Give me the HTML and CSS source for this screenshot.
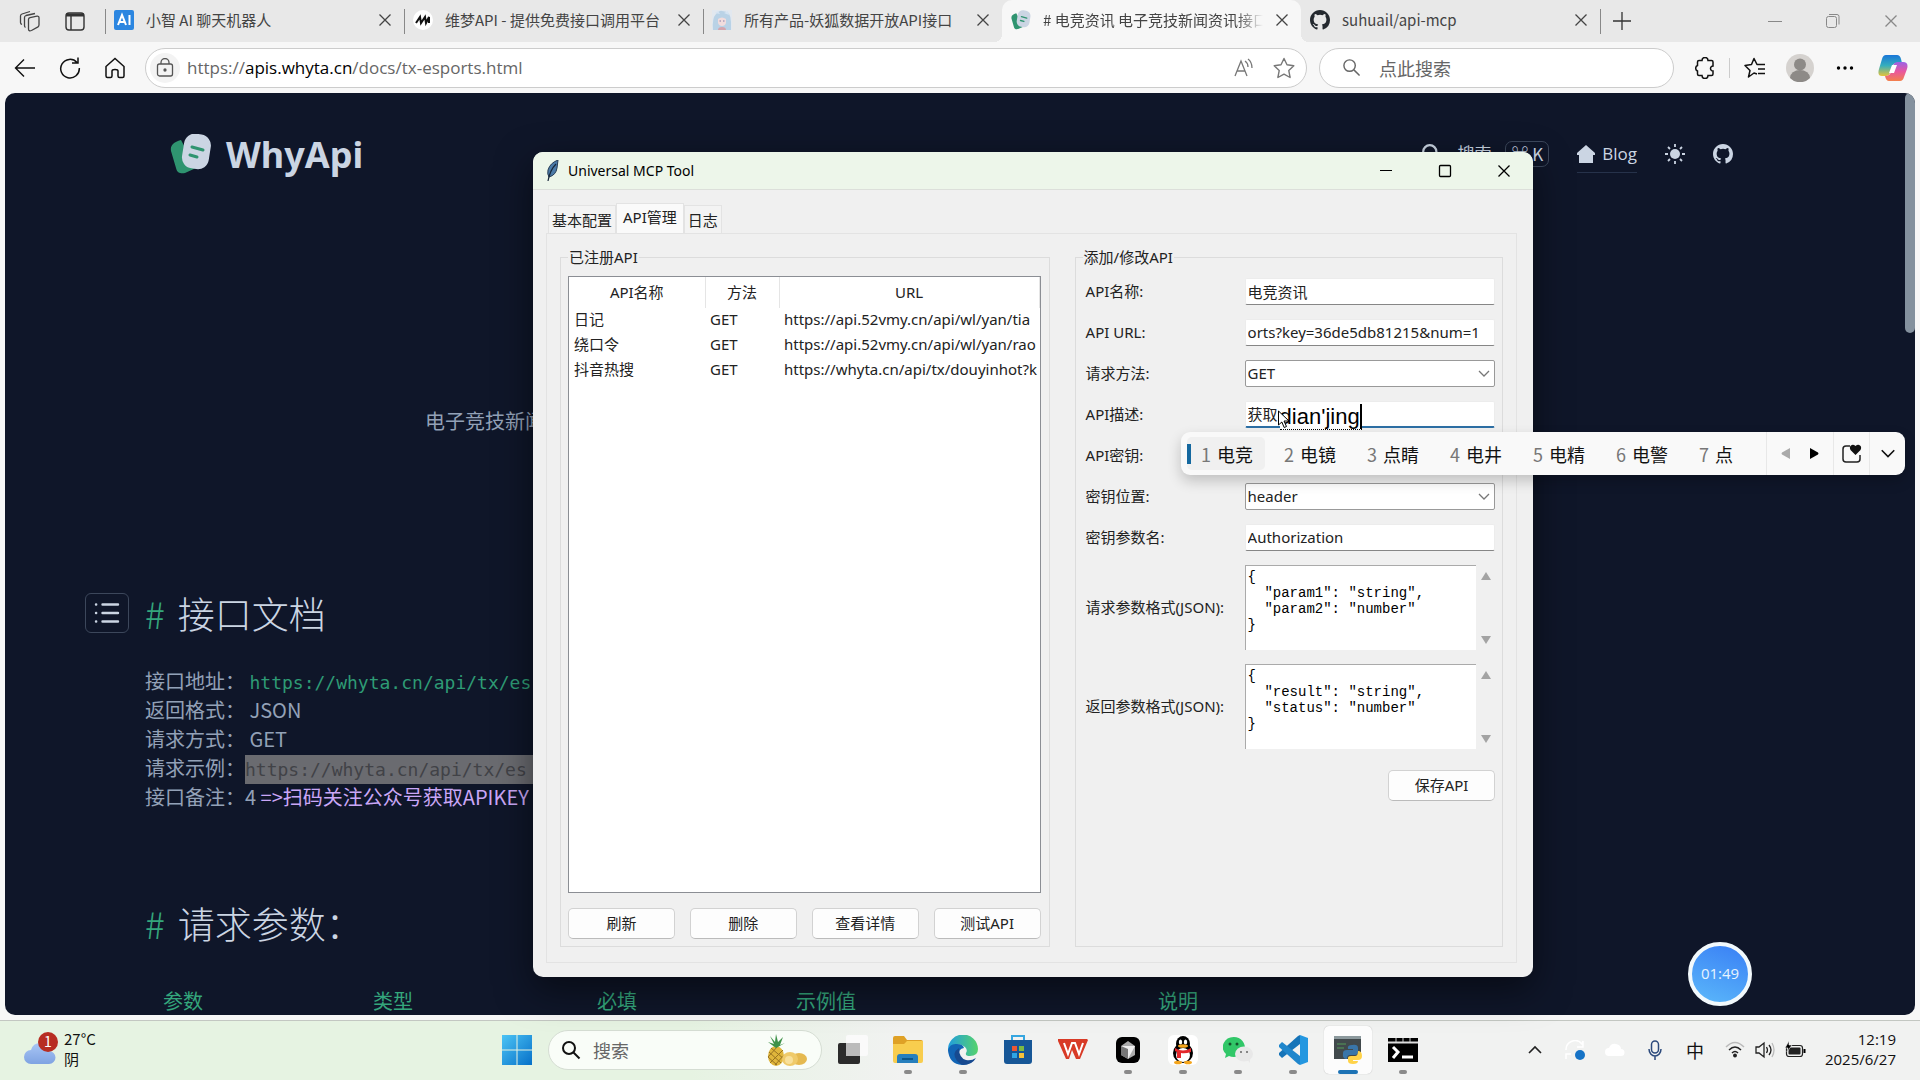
FILE: index.html
```html
<!DOCTYPE html>
<html lang="zh-CN">
<head>
    <meta charset="UTF-8">
    <meta name="viewport" content="width=device-width, initial-scale=1.0">
    <title>Universal MCP Tool</title>
    <link rel="stylesheet" href="styles.css">
</head>
<body>
    <!-- shared icons -->
    <svg class="defs" width="0" height="0" aria-hidden="true">
        <symbol id="github" viewBox="0 0 16 16"><path d="M8 0C3.58 0 0 3.58 0 8c0 3.54 2.29 6.53 5.47 7.59.4.07.55-.17.55-.38v-1.49c-2.01.37-2.53-.49-2.69-.94-.09-.23-.48-.94-.82-1.13-.28-.15-.68-.52-.01-.53.63-.01 1.08.58 1.23.82.72 1.21 1.87.87 2.33.66.07-.52.28-.87.51-1.07-1.78-.2-3.64-.89-3.64-3.95 0-.87.31-1.59.82-2.15-.08-.2-.36-1.02.08-2.12 0 0 .67-.21 2.2.82a7.6 7.6 0 0 1 4 0c1.53-1.04 2.2-.82 2.2-.82.44 1.1.16 1.92.08 2.12.51.56.82 1.27.82 2.15 0 3.07-1.87 3.75-3.65 3.95.29.25.54.73.54 1.48v2.2c0 .21.15.46.55.38A8 8 0 0 0 16 8c0-4.42-3.58-8-8-8z" fill="currentColor"/></symbol>
        <symbol id="close" viewBox="0 0 14 14"><path d="M1.500 1.500l11 11M12.500 1.500l-11 11" stroke="currentColor" stroke-width="1.300" fill="none"/></symbol>
        <symbol id="search" viewBox="0 0 20 20"><g stroke="currentColor" fill="none"><circle cx="8" cy="8" r="6"/><path d="M12.500 12.500l6 6"/></g></symbol>
        <symbol id="whyapi" viewBox="0 0 42 40"><path d="M11 6C4 8 0 11 1 17l5 17c1 5 5 6 9 5l11-5z" fill="#2f9470"/><rect x="13" y="0" width="27" height="35" rx="11" transform="rotate(9 27 17)" fill="#cbd5e3"/><path d="M22 13l11 3M20 21l7 2" stroke="#2f9470" stroke-width="3" stroke-linecap="round"/></symbol>
        <symbol id="chevron" viewBox="0 0 12 8"><path d="M1 1l5 5 5-5" stroke="currentColor" stroke-width="1.300" fill="none"/></symbol>
    </svg>

    <div class="browser">
        <div class="tab-bar">
            <button class="bar-btn" aria-label="工作区"><svg width="22" height="22" viewBox="0 0 22 22" fill="none" stroke="#444" stroke-width="1.300"><path d="M9.500 9.500q0-1.500 1.500-1.800l7-1.500q2-.3 2 1.500v7q0 1.500-1 2.200l-6.500 3.600q-3 1-3-1.500z"/><path d="M6.500 17.500q-1-.5-1-2V7.500q0-1.500 1.500-2l9-2M3 14.500q-1.500-.5-1.500-2V6q0-1.500 1.500-2l8-2.500"/></svg></button>
            <button class="bar-btn" aria-label="标签页操作"><svg width="20" height="20" viewBox="0 0 20 20" fill="none" stroke="#333" stroke-width="1.400"><rect x="1" y="2" width="18" height="17" rx="3"/><path d="M1 4.500h18M1 3.500h18" stroke-width="2"/><path d="M6 5v14"/></svg></button>
            <div class="tab">
                <svg class="fav" viewBox="0 0 20 20"><rect width="20" height="20" rx="2" fill="#2c86e0"/><path d="M4 15l4-10 4 10M5.500 12h5M15.500 5v10" stroke="#fff" stroke-width="2" fill="none"/></svg>
                <span class="tab-title">小智 AI 聊天机器人</span>
                <button class="tab-x" aria-label="关闭"><svg><use href="#close"/></svg></button>
            </div>
            <div class="tab">
                <svg class="fav" viewBox="0 0 20 20"><circle cx="10" cy="10" r="10" fill="#fff"/><path d="M3 13l4-6 1 6 4-6 1 6 3-6v6" stroke="#111" stroke-width="2" fill="none"/></svg>
                <span class="tab-title">维梦API - 提供免费接口调用平台</span>
                <button class="tab-x" aria-label="关闭"><svg><use href="#close"/></svg></button>
            </div>
            <div class="tab">
                <svg class="fav" viewBox="0 0 20 20"><rect width="20" height="20" fill="#e2e8ef"/><path d="M1 20Q0 8 4 4t6-3q9 0 9 11v8z" fill="#b9d2e6"/><path d="M3 3l3-2 2 3zM12 3l4-2 1 4z" fill="#d5e4f3"/><path d="M6 9q4-3 8 0v4q-1 3-4 3t-4-3z" fill="#f1dcdd"/><path d="M7.500 11H9M11 11h1.500" stroke="#8a7fa8"/><path d="M6 20q0-3 4-3t4 3z" fill="#d3a5ae"/></svg>
                <span class="tab-title">所有产品-妖狐数据开放API接口</span>
                <button class="tab-x" aria-label="关闭"><svg><use href="#close"/></svg></button>
            </div>
            <div class="tab active">
                <svg class="fav"><use href="#whyapi"/></svg>
                <span class="tab-title fade"># 电竞资讯 电子竞技新闻资讯接口</span>
                <button class="tab-x" aria-label="关闭"><svg><use href="#close"/></svg></button>
            </div>
            <div class="tab last">
                <svg class="fav dark"><use href="#github"/></svg>
                <span class="tab-title">suhuail/api-mcp</span>
                <button class="tab-x" aria-label="关闭"><svg><use href="#close"/></svg></button>
            </div>
            <button class="new-tab" aria-label="新建标签页"><svg width="18" height="18" viewBox="0 0 18 18"><path d="M9 0v18M0 9h18" stroke="#333" stroke-width="1.300"/></svg></button>
            <div class="browser-controls">
                <button aria-label="最小化"><svg width="14" height="14" viewBox="0 0 14 14"><path d="M0 7.500h14" stroke="#888"/></svg></button>
                <button aria-label="还原"><svg width="14" height="14" viewBox="0 0 14 14" fill="none" stroke="#888"><rect x=".5" y="2.500" width="10" height="11" rx="2"/><path d="M3 .5h8q2 0 2 2v8"/></svg></button>
                <button aria-label="关闭"><svg width="14" height="14" color="#888"><use href="#close"/></svg></button>
            </div>
        </div>

        <div class="toolbar">
            <button class="tool" aria-label="后退"><svg width="22" height="22" viewBox="0 0 22 22" fill="none" stroke="#111" stroke-width="1.400"><path d="M21 11H2M10 2.500L1.500 11l8.500 8.500"/></svg></button>
            <button class="tool" aria-label="刷新"><svg width="22" height="22" viewBox="0 0 22 22" fill="none" stroke="#111" stroke-width="1.500"><path d="M18 5.500A9.300 9.300 0 1 0 20.300 11M13 6h6V.5"/></svg></button>
            <button class="tool" aria-label="主页"><svg width="20" height="22" viewBox="0 0 20 22" fill="none" stroke="#111" stroke-width="1.500"><path d="M1 9.500L10 1.500l9 8V19q0 1.500-1.500 1.500h-3Q13 20.500 13 19v-5q0-1.500-3-1.500T7 14v5q0 1.500-1.500 1.500h-3Q1 20.500 1 19z"/></svg></button>
            <div class="address">
                <span class="lock"><svg width="18" height="20" viewBox="0 0 18 20" fill="none" stroke="#555" stroke-width="1.300"><rect x="1.500" y="6" width="15" height="12" rx="2"/><path d="M5 6V4.500a4 4 0 0 1 8 0V6"/><circle cx="9" cy="12" r="1" fill="#333"/></svg></span>
                <a class="url" href="#doc">https://<b>apis.whyta.cn</b>/docs/tx-esports.html</a>
                <button class="tool" aria-label="大声朗读"><svg width="22" height="20" viewBox="0 0 22 20" fill="none" stroke="#777" stroke-width="1.300"><path d="M2 18L8 3l6 15M4 13h8M12 3q3 2 3 6M15 1q4 3 4 9"/></svg></button>
                <button class="tool" aria-label="收藏"><svg width="22" height="22" viewBox="0 0 22 22" fill="none" stroke="#777" stroke-width="1.400" stroke-linejoin="round"><path d="M11 1.500l3 6.300 6.800 1-5 4.800 1.300 6.900-6.100-3.300-6.100 3.300 1.300-6.900-5-4.800 6.800-1z"/></svg></button>
            </div>
            <label class="side-search">
                <svg width="19" height="19" stroke-width="1.500"><use href="#search"/></svg>
                <input type="text" placeholder="点此搜索" aria-label="点此搜索">
            </label>
            <div class="tools">
                <button class="tool" aria-label="扩展"><svg width="20" height="22" viewBox="0 0 20 22" fill="none" stroke="#111" stroke-width="1.500"><path d="M7 3.500a3 3 0 0 1 6 0h3.500q1.500 0 1.500 1.500v4a2.500 2.500 0 1 0 0 5v3q0 1.500-1.500 1.500H13a3 3 0 0 1-6 0H4Q2.500 18.500 2.500 17v-3a3 3 0 0 1 0-5.500V5Q2.500 3.500 4 3.500z"/></svg></button>
                <span class="sep"></span>
                <button class="tool" aria-label="收藏夹"><svg width="22" height="22" viewBox="0 0 22 22" fill="none" stroke="#111" stroke-width="1.500" stroke-linejoin="round"><path d="M13 17l-3-1-5.500 4L6 13.500l-5-5 6.500-1L10 1.500l3 6h8M14 12h7M14 16.500h7"/></svg></button>
                <button class="tool" aria-label="个人资料"><svg width="28" height="28" viewBox="0 0 28 28"><circle cx="14" cy="14" r="14" fill="#d5d2cf"/><circle cx="14" cy="10.500" r="6" fill="#8d8a87"/><path d="M4 24a10 8 0 0 1 20 0 14 14 0 0 1-20 0z" fill="#8d8a87"/></svg></button>
                <button class="tool" aria-label="更多"><svg width="18" height="6" viewBox="0 0 18 6"><circle cx="2.500" cy="3" r="1.700"/><circle cx="9" cy="3" r="1.700"/><circle cx="15.500" cy="3" r="1.700"/></svg></button>
                <button class="tool copilot" aria-label="Copilot"><svg width="30" height="28" viewBox="0 0 30 28"><defs><linearGradient id="cp1" x2="0" y2="1"><stop stop-color="#1976d8"/><stop offset=".5" stop-color="#35aebd"/><stop offset="1" stop-color="#e5c43b"/></linearGradient><linearGradient id="cp2" x2="0" y2="1"><stop stop-color="#9a63e6"/><stop offset=".5" stop-color="#e9579f"/><stop offset="1" stop-color="#f3804c"/></linearGradient></defs><path d="M8 1h11q3 0 4 4l1 4h-5q-4 0-5 4l-2 6q-1 3-4 3H4q-5 0-3-7L4 5q1-4 4-4z" fill="url(#cp1)"/><path d="M22 27H11q-3 0-4-5 5 0 6-4l2-6q1-4 5-4h5q6 0 4 7l-3 8q-1 4-4 4z" fill="url(#cp2)"/><path d="M14 11h5l-3 8h-5z" fill="#fff"/></svg></button>
            </div>
        </div>

        <main class="page" id="doc">
            <header class="site-header">
                <a class="brand" href="#doc"><svg width="42" height="40"><use href="#whyapi"/></svg>WhyApi</a>
                <nav class="site-nav">
                    <a class="nav-search" href="#search"><svg width="22" height="22" stroke-width="2"><use href="#search"/></svg>搜索<kbd>⌘ K</kbd></a>
                    <a class="blog" href="#blog"><svg width="18" height="18" viewBox="0 0 18 18"><path d="M9 0l9 8v2h-2v8H2v-8H0V8z" fill="currentColor"/></svg>Blog</a>
                    <button aria-label="主题"><svg width="20" height="20" viewBox="0 0 20 20"><circle cx="10" cy="10" r="5" fill="currentColor"/><path d="M10 0v3M10 17v3M0 10h3M17 10h3M3 3l2 2M15 15l2 2M3 17l2-2M15 5l2-2" stroke="currentColor" stroke-width="1.800"/></svg></button>
                    <a href="#github" aria-label="GitHub"><svg width="20" height="20"><use href="#github"/></svg></a>
                </nav>
            </header>
            <p class="intro">电子竞技新闻</p>
            <section class="doc">
                <div class="doc-head">
                    <button class="toc" aria-label="目录"><svg width="26" height="22" viewBox="0 0 26 22" stroke="#cbd5e3" stroke-width="2.400" stroke-linecap="round"><path d="M8.500 2.500H24M8.500 11H24M8.500 19.500H24M2 2.500h.2M2 11h.2M2 19.500h.2"/></svg></button>
                    <h2><a href="#doc">#</a>接口文档</h2>
                </div>
                <ul class="facts">
                    <li>接口地址： <code>https://whyta.cn/api/tx/es</code></li>
                    <li>返回格式： JSON</li>
                    <li>请求方式： GET</li>
                    <li>请求示例：<code class="selected">https://whyta.cn/api/tx/es</code></li>
                    <li>接口备注：4 <a href="#key">=&gt;扫码关注公众号获取APIKEY</a></li>
                </ul>
                <h2 class="second"><a href="#params">#</a>请求参数：</h2>
                <table class="params">
                    <colgroup><col class="c1"><col class="c2"><col class="c3"><col class="c4"><col></colgroup>
                    <tr><th>参数</th><th>类型</th><th>必填</th><th>示例值</th><th>说明</th></tr>
                </table>
            </section>
            <span class="page-scroll"></span>
        </main>
    </div>

    <div class="timer">01:49</div>

    <section class="window">
        <div class="title-bar">
            <svg width="16" height="22" viewBox="0 0 16 22"><path d="M13 0Q5 3 3 10q-1 4 1 7 7-2 8-9z" fill="#4c7ba8" stroke="#263c55"/><path d="M11 4Q5 10 3 21" stroke="#17273a" stroke-width="1.200" fill="none"/></svg>
            <span>Universal MCP Tool</span>
            <button aria-label="最小化"><svg width="14" height="14" viewBox="0 0 14 14"><path d="M1 6.500h12" stroke="#000"/></svg></button>
            <button aria-label="最大化"><svg width="14" height="14" viewBox="0 0 14 14"><rect x="1.500" y="1.500" width="11" height="11" rx="1" fill="none" stroke="#000" stroke-width="1.300"/></svg></button>
            <button aria-label="关闭"><svg width="14" height="14"><use href="#close"/></svg></button>
        </div>
        <div class="window-body">
            <div class="tabs">
                <button>基本配置</button>
                <button class="current">API管理</button>
                <button>日志</button>
            </div>
            <div class="pane">
                <fieldset class="list-group">
                    <legend>已注册API</legend>
                    <div class="tree">
                        <table>
                            <colgroup><col class="name"><col class="method"><col></colgroup>
                            <thead><tr><th>API名称</th><th>方法</th><th>URL</th></tr></thead>
                            <tbody>
                                <tr><td>日记</td><td>GET</td><td>https://api.52vmy.cn/api/wl/yan/tia</td></tr>
                                <tr><td>绕口令</td><td>GET</td><td>https://api.52vmy.cn/api/wl/yan/rao</td></tr>
                                <tr><td>抖音热搜</td><td>GET</td><td>https://whyta.cn/api/tx/douyinhot?k</td></tr>
                            </tbody>
                        </table>
                    </div>
                    <div class="actions">
                        <button class="btn">刷新</button>
                        <button class="btn">删除</button>
                        <button class="btn">查看详情</button>
                        <button class="btn">测试API</button>
                    </div>
                </fieldset>
                <fieldset class="form-group">
                    <legend>添加/修改API</legend>
                    <label for="name">API名称:</label>
                    <input type="text" id="name" value="电竞资讯">
                    <label for="url">API URL:</label>
                    <input type="text" id="url" value="orts?key=36de5db81215&amp;num=1">
                    <label for="method">请求方法:</label>
                    <div class="select"><select id="method"><option>GET</option></select><svg width="12" height="8"><use href="#chevron"/></svg></div>
                    <label for="desc">API描述:</label>
                    <div class="compose">
                        <input type="text" id="desc" value="获取">
                        <span class="preedit">dian'jing</span>
                        <svg class="pointer" width="12" height="19" viewBox="0 0 12 19"><path d="M.5 1v14l3.300-3 2.400 5.500 2.300-1L6 11h5z" fill="#fff" stroke="#000"/></svg>
                    </div>
                    <label for="key">API密钥:</label>
                    <input type="text" id="key">
                    <label for="place">密钥位置:</label>
                    <div class="select"><select id="place"><option>header</option></select><svg width="12" height="8"><use href="#chevron"/></svg></div>
                    <label for="param">密钥参数名:</label>
                    <input type="text" id="param" value="Authorization">
                    <label for="request">请求参数格式(JSON):</label>
                    <div class="text-box">
                        <textarea id="request">{
  "param1": "string",
  "param2": "number"
}</textarea>
                        <span class="arrows"><i class="up"></i><i class="down"></i></span>
                    </div>
                    <label for="response">返回参数格式(JSON):</label>
                    <div class="text-box">
                        <textarea id="response">{
  "result": "string",
  "status": "number"
}</textarea>
                        <span class="arrows"><i class="up"></i><i class="down"></i></span>
                    </div>
                    <button class="btn save">保存API</button>
                </fieldset>
            </div>
        </div>
    </section>

    <!-- input method candidates -->
    <div class="ime">
        <button class="cand picked"><i>1</i>电竞</button>
        <button class="cand"><i>2</i>电镜</button>
        <button class="cand"><i>3</i>点睛</button>
        <button class="cand"><i>4</i>电井</button>
        <button class="cand"><i>5</i>电精</button>
        <button class="cand"><i>6</i>电警</button>
        <button class="cand"><i>7</i>点</button>
        <div class="ime-part pager">
            <button aria-label="上一页"><svg width="9" height="11" viewBox="0 0 9 11"><path d="M9 0v11L1 6.500q-1-1 0-2z" fill="#aaa"/></svg></button>
            <button aria-label="下一页"><svg width="9" height="11" viewBox="0 0 9 11"><path d="M0 0v11l8-4.500q1-1 0-2z"/></svg></button>
        </div>
        <div class="ime-part"><button aria-label="表情"><svg width="20" height="20" viewBox="0 0 20 20"><path d="M8 2H4Q1 2 1 5v10q0 3 3 3h11q3 0 3-3v-4" fill="none" stroke="#222" stroke-width="1.500"/><path d="M13.500 11L8.500 6Q7 3 9 1.500t4.500.5Q16 0 18 1.500T18.500 6z" fill="#111"/></svg></button></div>
        <div class="ime-part"><button aria-label="展开"><svg width="16" height="10"><use href="#chevron"/></svg></button></div>
    </div>

    <footer class="taskbar">
        <div class="weather">
            <svg width="36" height="34" viewBox="0 0 36 34"><defs><linearGradient id="cloud" x2="0" y2="1"><stop stop-color="#a9c6f5"/><stop offset="1" stop-color="#7fa3e2"/></linearGradient></defs><path d="M7 32a7 7 0 0 1 0-14Q9 11 16 11t9 8a6.500 6.500 0 0 1 0 13z" fill="url(#cloud)"/><circle cx="24" cy="10" r="10" fill="#b72d22"/><text x="24" y="15" text-anchor="middle" font-size="14" fill="#fff">1</text></svg>
            <p>27°C<br>阴</p>
        </div>
        <div class="dock">
            <button class="app" aria-label="开始"><svg width="30" height="30" viewBox="0 0 30 30"><defs><linearGradient id="win" x2="1" y2="1"><stop stop-color="#4cc4f5"/><stop offset="1" stop-color="#0670c8"/></linearGradient></defs><path d="M0 0h14.500v14.500H0zM15.500 0H30v14.500H15.500zM0 15.500h14.500V30H0zM15.500 15.500H30V30H15.500z" fill="url(#win)"/></svg></button>
            <label class="task-search">
                <svg width="20" height="20" stroke-width="2"><use href="#search"/></svg>
                <input type="text" placeholder="搜索" aria-label="搜索">
                <svg width="40" height="32" viewBox="0 0 40 32"><ellipse cx="9" cy="22" rx="8" ry="10" fill="#e0b63c"/><path d="M2 18l12 11M1 23l9 8M4 14l13 11M16 16L3 29M17 21l-9 10M11 12L1 23" stroke="#9a7420"/><path d="M9 14L1 8l6 2-4-8 5 6 1-8 2 8 5-5-3 8 5-2z" fill="#3d9148"/><ellipse cx="32" cy="25" rx="8" ry="6" fill="#e5b950"/><ellipse cx="23" cy="25" rx="8" ry="7" fill="#efca6a"/><circle cx="22" cy="26" r="4" fill="#f8e09a"/></svg>
            </label>
            <button class="app" aria-label="任务视图"><svg width="30" height="30" viewBox="0 0 30 30"><rect y="8" width="22" height="21" rx="2" fill="#2b2b2b"/><rect x="8" y="0" width="22" height="21" rx="2" fill="#fafafa"/><path d="M8 8h14v13H8z" fill="#bbb"/></svg></button>
            <button class="app open" aria-label="文件资源管理器"><svg width="30" height="30" viewBox="0 0 30 30"><path d="M0 3q0-2 2-2h9l3 4h14q2 0 2 2v19H0z" fill="#dfa126"/><path d="M0 9h11l3-3h16v20q0 2-2 2H2q-2 0-2-2z" fill="#f8cd4e"/><path d="M4 28v-6q0-3 3-3h15q3 0 3 3v6z" fill="#277fbd"/><path d="M9 24h11" stroke="#0d568a" stroke-width="2"/></svg></button>
            <button class="app open" aria-label="Edge"><svg width="30" height="30" viewBox="0 0 30 30"><defs><linearGradient id="edge" x2="1"><stop stop-color="#219dde"/><stop offset="1" stop-color="#55d36c"/></linearGradient></defs><path d="M0 15A15 15 0 0 1 30 14q0 7-8 7-5 0-4-3 2-3-1-6-6-5-12-1-4 2-5 7z" fill="url(#edge)"/><path d="M0 15q2-7 9-6 6 0 7 4-6 1-5 7 2 6 9 6 5 0 7-3-4 7-13 7Q1 29 0 15z" fill="#1265b5"/><path d="M11 13q-8 5-2 13 3 3 6 4 9 0 13-7-4 3-10 2-7-2-7-12z" fill="#174a90"/></svg></button>
            <button class="app" aria-label="应用商店"><svg width="30" height="30" viewBox="0 0 30 30"><path d="M9 7V1h12v6" fill="none" stroke="#35a6e0" stroke-width="2"/><path d="M1 5h28v21q0 3-3 3H4q-3 0-3-3z" fill="#175797"/><path d="M9 11h5v5H9z" fill="#ed5733"/><path d="M16 11h5v5h-5z" fill="#7dbb43"/><path d="M9 18h5v5H9z" fill="#30a6e5"/><path d="M16 18h5v5h-5z" fill="#f6c13a"/></svg></button>
            <button class="app" aria-label="WPS"><svg width="30" height="22" viewBox="0 0 30 22"><path d="M0 0h29l1 1-8 19h-4l-4-9-3 9H8L0 2z" fill="#d83a26"/><path d="M6 4l4 11 4-11h3l4 11 4-11" stroke="#fff" stroke-width="2" fill="none"/></svg></button>
            <button class="app open" aria-label="Cursor"><svg width="24" height="26" viewBox="0 0 24 26"><rect width="24" height="26" rx="6"/><path d="M12 4l7 5v9l-7 4-7-4V9z" fill="#aaa"/><path d="M5 9h14l-7 13z" fill="#eee"/><path d="M5 9l7 3v10l-7-4z" fill="#777"/></svg></button>
            <button class="app open" aria-label="QQ"><svg width="30" height="30" viewBox="0 0 30 30"><rect width="30" height="30" rx="6" fill="#fff"/><ellipse cx="15" cy="18" rx="10" ry="10"/><ellipse cx="15" cy="9" rx="7" ry="8"/><ellipse cx="15" cy="20" rx="7" ry="7" fill="#fff"/><ellipse cx="12.500" cy="7" rx="1.700" ry="2.500" fill="#fff"/><ellipse cx="17.500" cy="7" rx="1.700" ry="2.500" fill="#fff"/><ellipse cx="15" cy="11" rx="5" ry="1.800" fill="#f4a51c"/><path d="M7 13q8 5 16 0v4q-6 2-10 1v5H9v-6l-2-1z" fill="#e3272b"/><ellipse cx="10" cy="27.500" rx="4" ry="1.800" fill="#f4a51c"/><ellipse cx="20" cy="27.500" rx="4" ry="1.800" fill="#f4a51c"/></svg></button>
            <button class="app open" aria-label="微信"><svg width="30" height="26" viewBox="0 0 30 26"><path d="M11 0a11 10 0 1 1-5 19l-4 2 1-4A11 10 0 0 1 11 0z" fill="#31c768"/><circle cx="7" cy="7" r="1.500" fill="#14522c"/><circle cx="14" cy="7" r="1.500" fill="#14522c"/><ellipse cx="21" cy="17" rx="9" ry="7.500" fill="#e8e8e8"/><path d="M24 22l3 4v-5z" fill="#e8e8e8"/><circle cx="18" cy="15" r="1" fill="#666"/><circle cx="24" cy="15" r="1" fill="#666"/></svg></button>
            <button class="app open" aria-label="VS Code"><svg width="30" height="30" viewBox="0 0 30 30"><path d="M22 0l8 3v24l-8 3z" fill="#2497e0"/><path d="M22 0v9L4 23l-3-3v-2L20 1z" fill="#1674b8"/><path d="M22 30v-9L4 7l-3 3v2l19 17z" fill="#1f86cc"/></svg></button>
            <button class="app open running" aria-label="Python"><svg width="28" height="28" viewBox="0 0 28 28"><path d="M0 0h27v23H0z" fill="#41494c"/><path d="M0 0h27v3H0z" fill="#8c999d"/><path d="M3 8h9M3 12h7" stroke="#559c58"/><path d="M18 9q6-1 6 3v4q0 3-3 3h-5q-3 0-3 4-5 0-4-6 0-3 4-3h6v-1h-5q-1-4 4-4z" fill="#3975a9"/><path d="M24 15q4 0 4 5 0 4-4 4h-5v1h5q0 3-5 3-5 0-5-3v-3q0-2 3-2h4q3 0 3-5z" fill="#ffd34a"/></svg></button>
            <button class="app open" aria-label="终端"><svg width="30" height="24" viewBox="0 0 30 24"><path d="M0 0h30v24H0z"/><path d="M0 4.500h30" stroke="#ddd" stroke-width="2"/><path d="M8 0v4M15 0v4M22 0v4" stroke="#ccc"/><path d="M5 9l5 5-5 6" fill="none" stroke="#fff" stroke-width="3"/><path d="M14 19h11" stroke="#fff" stroke-width="3"/></svg></button>
        </div>
        <div class="tray">
            <button aria-label="显示隐藏的图标"><svg width="14" height="9" viewBox="0 0 14 9"><path d="M1 8l6-6 6 6" fill="none" stroke="#222" stroke-width="1.600"/></svg></button>
            <button aria-label="同步"><svg width="20" height="20" viewBox="0 0 20 20"><path d="M1 10a9 9 0 0 1 16-6l1-3v6h-6M1 19v-5h5" fill="none" stroke="#fff" stroke-width="1.500"/><circle cx="15" cy="15" r="5" fill="#1673c6"/></svg></button>
            <button aria-label="OneDrive"><svg width="20" height="14" viewBox="0 0 20 14"><path d="M4 13a4 4 0 0 1 0-8q2-5 7-4t5 5a3.500 3.500 0 0 1 0 7z" fill="#fff"/></svg></button>
            <button aria-label="麦克风"><svg width="14" height="20" viewBox="0 0 14 20" fill="none" stroke="#2c4a7c" stroke-width="1.500"><rect x="3.500" y="1" width="7" height="12" rx="3.500"/><path d="M1 9a6 7 0 0 0 12 0M7 16v4"/></svg></button>
            <button>中</button>
            <div class="status">
                <svg width="20" height="18" viewBox="0 0 20 18" fill="none" stroke="#222" stroke-width="1.500"><path d="M1 6q9-9 18 0" stroke="#bbb"/><path d="M4 9q6-6 12 0M7 12q3-3 6 0"/><circle cx="10" cy="14.500" r="1.200" fill="#222"/></svg>
                <svg width="20" height="18" viewBox="0 0 20 18" fill="none" stroke="#222" stroke-width="1.300"><path d="M1 6h3l5-4v14l-5-4H1zM11.500 6q2 3 0 6M14 4q4 5 0 10"/><path d="M17 2q4 7 0 14" stroke="#bbb"/></svg>
                <svg width="21" height="18" viewBox="0 0 21 18"><rect x="1.500" y="4.500" width="16" height="11" rx="2.500" fill="none" stroke="#222" stroke-width="1.200"/><rect x="3.500" y="6.500" width="12" height="7" rx="1" fill="#222"/><path d="M18.500 8h2v4h-2z"/><path d="M4 0L0 7h3l-1 4 5-7H4z" stroke="#f1f1f1" stroke-width=".6"/></svg>
            </div>
            <p class="clock">12:19<br>2025/6/27</p>
        </div>
    </footer>
</body>
</html>
```
FILE: styles.css
```css
* {
    margin: 0;
    padding: 0;
    box-sizing: border-box;
}

body {
    display: flex;
    flex-direction: column;
    position: relative;
    height: 100vh;
    overflow: hidden;
    background-color: #f7f7f7;
    font-family: "Open Sans", "Noto Sans CJK SC", sans-serif;
    font-size: 15px;
    color: #111;
}

button,
input,
select {
    border: none;
    background: none;
    font: inherit;
    color: inherit;
    outline: none;
}

a {
    color: inherit;
    text-decoration: none;
}

svg {
    flex: none;
    display: block;
}

.defs {
    position: absolute;
}

/* browser */
.browser {
    flex: 1;
    min-height: 0;
    display: flex;
    flex-direction: column;
    padding: 0 5px 5px;
}

.tab-bar {
    display: flex;
    align-items: center;
    height: 42px;
    margin: 0 -5px;
    padding-left: 7px;
    background-color: #e8e8e8;
}

.bar-btn {
    display: flex;
    justify-content: center;
    width: 45px;
}

.bar-btn + .tab {
    margin-left: 8px;
}

.tab {
    position: relative;
    display: flex;
    align-items: center;
    flex: 0 1 299px;
    height: 100%;
    padding: 0 12px 3px 9px;
    min-width: 0;
    font-family: "Noto Sans CJK SC", sans-serif;
    color: #444;
}

.tab::before,
.new-tab::before {
    content: "";
    position: absolute;
    left: 0;
    top: 9px;
    width: 1px;
    height: 25px;
    background-color: #888;
}

.tab.last::before {
    display: none;
}

.tab.active {
    background-color: #f7f7f7;
    border-radius: 10px 10px 0 0;
}

/* curved feet of the active tab */
.tab.active::before,
.tab.active::after {
    content: "";
    position: absolute;
    left: -8px;
    top: auto;
    bottom: 0;
    width: 8px;
    height: 8px;
    background: radial-gradient(circle at 0 0, transparent 8px, #f7f7f7 8px);
}

.tab.active::after {
    left: 100%;
    background: radial-gradient(circle at 100% 0, transparent 8px, #f7f7f7 8px);
}

.fav {
    width: 20px;
    height: 20px;
    margin-right: 12px;
}

.dark {
    color: #24292f;
}

.tab-title {
    flex: 1;
    overflow: hidden;
    white-space: nowrap;
}

.fade {
    mask-image: linear-gradient(to right, #000 88%, transparent);
}

.tab-x {
    margin-left: 12px;
}

.tab-x svg {
    width: 14px;
    height: 14px;
}

.new-tab {
    align-self: stretch;
    padding: 0 13px;
    position: relative;
}

.browser-controls {
    display: flex;
    margin-left: auto;
}

.browser-controls button {
    display: flex;
    justify-content: center;
    width: 58px;
}

.toolbar {
    display: flex;
    align-items: center;
    height: 51px;
    margin: 0 -5px;
    padding-left: 2px;
}

.tool {
    display: flex;
    justify-content: center;
    width: 45px;
}

.address {
    display: flex;
    align-items: center;
    flex: 1;
    height: 40px;
    margin-left: 8px;
    padding: 0 2px 0 4px;
    border: 1px solid #ccc;
    border-radius: 20px;
    background-color: #fff;
}

.address .tool {
    width: 40px;
}

.lock {
    display: flex;
    align-items: center;
    justify-content: center;
    width: 30px;
    height: 30px;
    margin-right: 7px;
    border-radius: 15px;
    background-color: #f3f3f3;
}

.url {
    flex: 1;
    font-size: 17px;
    color: #666;
}

.url b {
    font-weight: 400;
    color: #000;
}

.side-search {
    display: flex;
    align-items: center;
    gap: 18px;
    width: 355px;
    height: 40px;
    margin-left: 12px;
    padding: 0 22px;
    border: 1px solid #ccc;
    border-radius: 20px;
    background-color: #fff;
    color: #666;
}

.side-search input,
.task-search input {
    flex: 1;
    min-width: 0;
    font-family: "Noto Sans CJK SC", sans-serif;
    font-size: 18px;
}

::placeholder {
    color: #666;
    opacity: 1;
}

.tools {
    display: flex;
    align-items: center;
    padding: 0 2px 0 8px;
}

.copilot {
    width: 51px;
}

.sep {
    width: 1px;
    height: 20px;
    background-color: #ccc;
    margin: 0 2px;
}

/* documentation page */
.page {
    position: relative;
    flex: 1;
    min-height: 0;
    overflow: hidden;
    border-radius: 10px;
    background-color: #0f1629;
    color: #93a1b7;
    font-size: 18px;
}

.site-header {
    display: flex;
    align-items: center;
    justify-content: space-between;
    height: 122px;
    padding: 0 182px 0 165px;
    color: #cbd5e3;
}

.brand {
    display: flex;
    align-items: center;
    gap: 14px;
    font-family: "Noto Sans", sans-serif;
    font-size: 36px;
    font-weight: 700;
}

.site-nav {
    display: flex;
    align-items: center;
    gap: 28px;
    font-size: 17px;
    line-height: 36px;
}

.site-nav a,
.site-nav button {
    display: flex;
    align-items: center;
}

.nav-search {
    gap: 14px;
}

kbd {
    padding: 0 5px;
    border: 1px solid #3c475b;
    border-radius: 7px;
    font-family: "Noto Sans CJK SC", sans-serif;
    font-size: 17px;
    line-height: 24px;
}

.site-nav .blog {
    gap: 7px;
    border-bottom: 1px solid #26324a;
}

.intro {
    margin: 192px 0 152px 420px;
    font-size: 20px;
    line-height: 30px;
}

.doc {
    padding: 0 140px;
}

.doc-head {
    display: flex;
    align-items: center;
    gap: 16px;
    margin-left: -60px;
}

.toc {
    display: flex;
    align-items: center;
    justify-content: center;
    width: 44px;
    height: 40px;
    border: 1px solid #3c475b;
    border-radius: 6px;
}

h2 {
    display: flex;
    gap: 13px;
    font-family: "Noto Sans CJK SC", sans-serif;
    font-size: 37px;
    font-weight: 300;
    line-height: 48px;
    color: #cbd5e3;
}

h2 a {
    color: #34a67c;
}

.facts {
    margin: 29px 0 88px;
    list-style: none;
    font-size: 20px;
    line-height: 29px;
    white-space: nowrap;
    font-family: "Noto Sans CJK SC", sans-serif;
}

.facts li {
    height: 29px;
}

.facts code {
    font-family: "DejaVu Sans Mono", monospace;
    font-size: 18px;
    color: #2e9b75;
}

.facts .selected {
    display: inline-block;
    padding-right: 20px;
    background-color: #6a6b70;
    color: #414247;
}

.facts a {
    color: #caa7f7;
}

.params {
    width: 100%;
    margin-top: 41px;
    table-layout: fixed;
    border-collapse: collapse;
    color: #34a67c;
    font-size: 20px;
    line-height: 28px;
}

.params th {
    padding-left: 18px;
    text-align: left;
    font-weight: 400;
}

.c1 { width: 210px; }
.c2 { width: 224px; }
.c3 { width: 199px; }
.c4 { width: 362px; }

.page-scroll {
    position: absolute;
    top: 0;
    right: 0;
    width: 10px;
    height: 240px;
    border-radius: 5px;
    background-color: #84919e;
}

.timer {
    position: absolute;
    left: 1688px;
    top: 942px;
    width: 64px;
    height: 64px;
    border: 4px solid #f2f9fc;
    border-radius: 50%;
    background: linear-gradient(200deg, #397ff5, #5bb8fa);
    color: #e7f4ff;
    font-size: 15px;
    line-height: 54px;
    text-align: center;
}

/* tool window */
.window {
    position: absolute;
    left: 533px;
    top: 152px;
    width: 1000px;
    border-radius: 10px;
    background-color: #f0f0f0;
    box-shadow: 0 12px 36px rgba(0, 0, 0, 0.5);
    font-family: "Noto Sans", "Noto Sans CJK SC", sans-serif;
    font-size: 15px;
    color: #222;
}

.title-bar {
    display: flex;
    align-items: center;
    height: 38px;
    padding-left: 12px;
    border-bottom: 1px solid #dcdfda;
    border-radius: 10px 10px 0 0;
    background-color: #edf6ea;
    font-size: 14px;
    color: #000;
}

.title-bar span {
    flex: 1;
    margin-left: 7px;
}

.title-bar button {
    display: flex;
    justify-content: center;
    width: 59px;
}

.window-body {
    padding: 13px 16px 14px 13px;
}

.tabs {
    display: flex;
    align-items: flex-end;
    margin-left: 2px;
}

.tabs button {
    height: 28px;
    padding: 0 3px;
    border: 1px solid #e3e3e3;
    border-bottom: none;
    background-color: #f3f3f3;
}

.tabs .current {
    height: 30px;
    padding: 0 6px 4px;
    background-color: #fafafa;
}

.pane {
    display: grid;
    grid-template-columns: 8fr 7fr;
    gap: 25px;
    padding: 12px 13px 15px;
    border: 1px solid #e3e3e3;
}

fieldset {
    min-width: 0;
    border: 1px solid #dcdcdc;
    padding: 6px 8px 7px 7px;
}

legend {
    padding: 0 1px;
    line-height: 22px;
    margin-bottom: 2px;
}

.tree {
    min-height: 617px;
    border: 1px solid #8b8e94;
    background-color: #fff;
    overflow: hidden;
}

.tree table {
    width: 100%;
    table-layout: fixed;
    border-collapse: collapse;
    line-height: 22px;
}

.tree th {
    height: 31px;
    padding-bottom: 2px;
    border-right: 1px solid #e5e5e5;
    font-weight: 400;
}

.tree td {
    height: 25px;
    padding: 0 5px 3px;
    overflow: hidden;
    white-space: nowrap;
}

.name { width: 136px; }
.method { width: 74px; }

.actions {
    display: grid;
    grid-template-columns: repeat(4, 1fr);
    gap: 15px;
    margin-top: 15px;
}

.btn {
    height: 31px;
    padding-bottom: 2px;
    border: 1px solid #d2d2d2;
    border-bottom-color: #bbb;
    border-radius: 5px;
    background-color: #fdfdfd;
}

.form-group {
    display: grid;
    grid-template-columns: 159px 1fr;
    align-content: start;
    align-items: center;
    gap: 14px 0;
    padding: 8px 7px 0 10px;
}

.form-group legend {
    margin-left: -3px;
}

.form-group label {
    padding-bottom: 2px;
}

.form-group input,
.form-group select {
    display: block;
    width: 100%;
    height: 27px;
    padding: 0 2px 1px;
    border: 1px solid #ececec;
    border-bottom-color: #868686;
    border-radius: 2px;
    background-color: #fff;
}

.form-group select {
    appearance: none;
    border-color: #999;
}

.select,
.compose {
    position: relative;
}

.select svg {
    position: absolute;
    right: 5px;
    top: 10px;
    color: #777;
}

.form-group .compose input {
    border-bottom: 2px solid #2d6fa5;
}

.preedit {
    position: absolute;
    left: 35px;
    top: 3px;
    border-right: 2px solid #000;
    border-bottom: 1px dotted #000;
    background-color: #fff;
    font-family: "Liberation Sans", sans-serif;
    font-size: 22px;
    line-height: 25px;
    color: #000;
}

.pointer {
    position: absolute;
    left: 33px;
    top: 9px;
}

.text-box {
    display: flex;
    height: 85px;
}

textarea {
    flex: 1;
    min-width: 0;
    padding: 3px 2px;
    border: 1px solid #aaa;
    border-right: none;
    border-bottom: none;
    outline: none;
    resize: none;
    overflow: hidden;
    font-family: "Liberation Mono", monospace;
    font-size: 14px;
    line-height: 16px;
    color: #000;
}

.arrows {
    display: flex;
    flex-direction: column;
    justify-content: space-between;
    padding: 7px 4px 6px 5px;
}

.arrows i {
    border: 5px solid transparent;
}

.arrows .up {
    border-top: none;
    border-bottom: 8px solid #a3a3a3;
}

.arrows .down {
    border-bottom: none;
    border-top: 8px solid #a3a3a3;
}

.save {
    grid-column: 2;
    justify-self: end;
    width: 107px;
    margin-top: 7px;
}

/* candidate bar */
.ime {
    position: absolute;
    left: 1181px;
    top: 432px;
    display: flex;
    align-items: center;
    height: 43px;
    padding-left: 6px;
    border-radius: 9px;
    background-color: #f9f9f9;
    box-shadow: 0 6px 14px rgba(0, 0, 0, 0.2);
    font-family: "Noto Sans CJK SC", sans-serif;
    font-size: 18px;
}

.cand {
    height: 33px;
    margin-right: 5px;
    padding: 0 12px 0 14px;
    border-radius: 5px;
    white-space: nowrap;
}

.cand i {
    margin-right: 6px;
    font-style: normal;
    color: #777;
}

.picked {
    background: linear-gradient(#14689f, #14689f) 0 50% / 4px 20px no-repeat #f0f0f0;
}

.ime-part {
    display: flex;
    align-items: center;
    justify-content: center;
    width: 36px;
    height: 100%;
    border-left: 1px solid #e8e8e8;
}

.ime .pager {
    gap: 20px;
    width: 67px;
    margin-left: 16px;
}

/* taskbar */
.taskbar {
    display: grid;
    grid-template-columns: 1fr auto 1fr;
    align-items: center;
    height: 60px;
    padding-bottom: 2px;
    border-top: 1px solid #c3c7c2;
    background: linear-gradient(to right, #e6f3e2 36%, #f1f2f1 47%);
}

.taskbar button {
    display: flex;
    align-items: center;
    justify-content: center;
}

.weather {
    display: flex;
    align-items: center;
    gap: 4px;
    padding: 0 0 2px 24px;
    font-family: "Noto Sans CJK SC", sans-serif;
    line-height: 20px;
}

.dock {
    display: flex;
    align-items: center;
    gap: 7px;
}

.app {
    position: relative;
    width: 48px;
    height: 48px;
    border-radius: 5px;
}

.open::after {
    content: "";
    position: absolute;
    bottom: 0;
    width: 8px;
    height: 4px;
    border-radius: 2px;
    background-color: #8a8a8a;
}

.running {
    background-color: #fcfcfc;
    box-shadow: 0 0 1px #aaa;
}

.running::after {
    width: 20px;
    background-color: #1d73b5;
}

.task-search {
    display: flex;
    align-items: center;
    gap: 12px;
    width: 274px;
    height: 40px;
    padding: 0 14px 0 12px;
    border: 1px solid #d5ddd3;
    border-radius: 20px;
    background-color: #f9fdf8;
}

.tray {
    display: flex;
    align-items: center;
    justify-content: flex-end;
    padding-right: 24px;
}

.tray button {
    width: 40px;
    font-size: 18px;
}

.status {
    display: flex;
    gap: 10px;
    margin: 0 19px 0 10px;
}

.clock {
    padding-bottom: 2px;
    line-height: 20px;
    text-align: right;
}
```
